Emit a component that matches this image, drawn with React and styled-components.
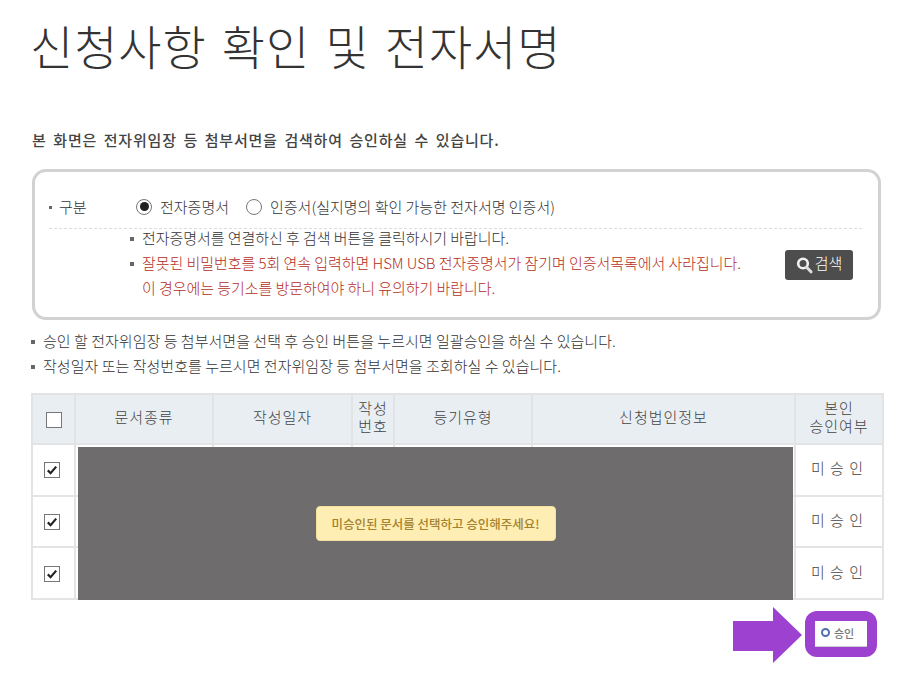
import React from 'react';
import styled, { createGlobalStyle } from 'styled-components';

const GlobalStyle = createGlobalStyle`
  html, body {
    margin: 0;
    padding: 0;
    background: #fff;
    font-family: "Noto Sans CJK KR", "Liberation Sans", sans-serif;
    color: #333;
  }
`;

const Page = styled.div`
  width: 918px;
  height: 676px;
  overflow: hidden;
  padding: 14px 34px 0 31px;
  box-sizing: border-box;
`;

const Title = styled.h1`
  margin: 0 0 0 -1px;
  font-size: 47px;
  line-height: 62px;
  font-weight: 300;
  color: #333;
  letter-spacing: 0.9px;
  word-spacing: 4px;
`;

const Intro = styled.p`
  margin: 54px 0 0 1px;
  font-size: 15px;
  line-height: 20px;
  font-weight: 500;
  color: #444;
  letter-spacing: 0.8px;
  word-spacing: 2.5px;
`;

const SearchBox = styled.section`
  margin: 19px 3px 0 1px;
  height: 151px;
  box-sizing: border-box;
  border: 3px solid #d2d2d2;
  border-radius: 14px;
  padding: 17px 16px 0 14px;
`;

const TypeRow = styled.div`
  display: flex;
  align-items: center;
  height: 40px;
  padding-bottom: 4px;
  box-sizing: border-box;
  border-bottom: 1px dashed #ddd;
  font-size: 15px;
  font-weight: 300;
`;

const Bullet = styled.i`
  flex: none;
  width: ${(p) => p.$size || 3}px;
  height: ${(p) => p.$size || 3}px;
  margin-top: 2px;
  background: #666;
`;

const TypeLabel = styled.span`
  width: 77px;
  margin-left: 7px;
`;

const RadioLabel = styled.label`
  display: flex;
  align-items: center;
  gap: 8px;
  margin-right: ${(p) => p.$gap || 0}px;
  letter-spacing: 0;
`;

const Radio = styled.span`
  width: 16px;
  height: 16px;
  box-sizing: border-box;
  border: 1.5px solid #777;
  border-radius: 50%;
  background: #fff;
  display: flex;
  align-items: center;
  justify-content: center;
  &::after {
    content: '';
    display: ${(p) => (p.$on ? 'block' : 'none')};
    width: 9px;
    height: 9px;
    border-radius: 50%;
    background: #222;
  }
`;

const NoticeRow = styled.div`
  display: flex;
  align-items: center;
  justify-content: space-between;
  padding-right: 9px;
  margin-top: -4px;
`;

const NoticeList = styled.ul`
  margin: 0;
  padding: 0 0 0 81px;
  list-style: none;
`;

const Notice = styled.li`
  display: flex;
  align-items: center;
  gap: 8px;
  height: 25px;
  font-size: 15px;
  font-weight: 300;
  letter-spacing: -0.05px;
  color: ${(p) => (p.$red ? '#b52e1c' : '#333')};
  padding-left: ${(p) => (p.$indent ? 12 : 0)}px;
`;

const SearchButton = styled.button`
  display: flex;
  align-items: center;
  justify-content: center;
  gap: 2px;
  width: 68px;
  height: 30px;
  padding: 0;
  margin-top: 4px;
  border: 0;
  border-radius: 3px;
  background: #4d4d4d;
  color: #fff;
  font-family: inherit;
  font-size: 15px;
  font-weight: 300;
`;

const SearchText = styled.span`
  margin-bottom: 4px;
`;

const GuideList = styled.ul`
  margin: 8px 0 0;
  padding: 0;
  list-style: none;
`;

const Guide = styled.li`
  display: flex;
  align-items: center;
  gap: 8px;
  height: 25px;
  font-size: 15px;
  font-weight: 300;
  letter-spacing: 0.03px;
  color: #333;
`;

const TableWrap = styled.div`
  position: relative;
  margin-top: 15px;
  width: 853px;
`;

const Table = styled.table`
  width: 851px;
  height: 207px;
  table-layout: fixed;
  border-collapse: collapse;
  font-size: 15px;
  font-weight: 300;
`;

const Th = styled.th`
  height: 50px;
  padding: 0 0 4px;
  box-sizing: border-box;
  border: 2px solid #e1e3e5;
  background: #e9eef3;
  font-weight: 300;
  line-height: 18px;
  letter-spacing: 1px;
  color: #444;
`;

const HeadCheck = styled.span`
  display: block;
  padding-top: 4px;
`;

const Td = styled.td`
  height: 49px;
  padding: 0 ${(p) => p.$right || 0}px 4px 0;
  box-sizing: border-box;
  border: 2px solid #e4e4e4;
  text-align: center;
  letter-spacing: 1px;
  color: #444;
`;

const Check = styled.span`
  display: inline-flex;
  align-items: center;
  justify-content: center;
  vertical-align: middle;
  width: 16px;
  height: 16px;
  box-sizing: border-box;
  border: 1.5px solid #777;
  background: #fff;
`;

const Overlay = styled.div`
  position: absolute;
  left: 47px;
  top: 54px;
  width: 715px;
  height: 153px;
  background: #6e6c6c;
  display: flex;
  align-items: center;
  justify-content: center;
`;

const Toast = styled.div`
  width: 240px;
  height: 35px;
  box-sizing: border-box;
  border: 1px solid #f4dfa0;
  border-radius: 4px;
  background: #ffeeb4;
  color: #a5822e;
  font-size: 12.5px;
  font-weight: 500;
  display: flex;
  align-items: center;
  justify-content: center;
`;

const ApproveRow = styled.div`
  display: flex;
  justify-content: flex-end;
  align-items: center;
  gap: 3px;
  margin-top: 5px;
  padding-right: 7px;
`;

const ArrowWrap = styled.span`
  display: flex;
  margin-top: 2px;
`;

const ApproveFrame = styled.div`
  width: 72px;
  height: 46px;
  box-sizing: border-box;
  padding: 10px;
  border-radius: 12px;
  background: #9d41d0;
`;

const ApproveButton = styled.button`
  display: flex;
  align-items: center;
  gap: 4px;
  width: 52px;
  height: 26px;
  padding: 0 0 2px 6px;
  box-sizing: border-box;
  border: 0;
  border-bottom: 1px solid #ccc;
  background: #fff;
  font-family: inherit;
  font-size: 11px;
  font-weight: 500;
  color: #777;
`;

const Dot = styled.i`
  width: 9px;
  height: 9px;
  box-sizing: border-box;
  border: 2.5px solid #4f6fae;
  border-radius: 50%;
  background: #fff;
`;

const SearchIcon = () => (
  <svg width="17" height="18" viewBox="0 0 17 18" fill="none">
    <circle cx="7" cy="7.5" r="4.8" stroke="#f2f2f2" strokeWidth="2.6" />
    <path d="M10.6 11.2 L15 15.8" stroke="#ddd" strokeWidth="3" strokeLinecap="round" />
  </svg>
);

const CheckMark = () => (
  <svg width="12" height="12" viewBox="0 0 12 12" fill="none">
    <path d="M1.8 6.4 L4.6 9.2 L10.2 2.6" stroke="#222" strokeWidth="2.2" />
  </svg>
);

const Arrow = () => (
  <svg width="69" height="56" viewBox="0 0 69 56">
    <path d="M0 14 H40 V0 L69 28 L40 56 V44 H0 Z" fill="#9d41d0" />
  </svg>
);

const rows = [0, 1, 2];

export default function App() {
  return (
    <Page>
      <GlobalStyle />
      <Title>신청사항 확인 및 전자서명</Title>
      <Intro>본 화면은 전자위임장 등 첨부서면을 검색하여 승인하실 수 있습니다.</Intro>

      <SearchBox>
        <TypeRow>
          <Bullet />
          <TypeLabel>구분</TypeLabel>
          <RadioLabel $gap={17}>
            <Radio $on />
            전자증명서
          </RadioLabel>
          <RadioLabel>
            <Radio />
            인증서(실지명의 확인 가능한 전자서명 인증서)
          </RadioLabel>
        </TypeRow>
        <NoticeRow>
          <NoticeList>
            <Notice>
              <Bullet $size={4} />
              전자증명서를 연결하신 후 검색 버튼을 클릭하시기 바랍니다.
            </Notice>
            <Notice $red>
              <Bullet $size={4} />
              잘못된 비밀번호를 5회 연속 입력하면 HSM USB 전자증명서가 잠기며 인증서목록에서 사라집니다.
            </Notice>
            <Notice $red $indent>이 경우에는 등기소를 방문하여야 하니 유의하기 바랍니다.</Notice>
          </NoticeList>
          <SearchButton>
            <SearchIcon />
            <SearchText>검색</SearchText>
          </SearchButton>
        </NoticeRow>
      </SearchBox>

      <GuideList>
        <Guide>
          <Bullet $size={4} />
          승인 할 전자위임장 등 첨부서면을 선택 후 승인 버튼을 누르시면 일괄승인을 하실 수 있습니다.
        </Guide>
        <Guide>
          <Bullet $size={4} />
          작성일자 또는 작성번호를 누르시면 전자위임장 등 첨부서면을 조회하실 수 있습니다.
        </Guide>
      </GuideList>

      <TableWrap>
        <Table>
          <colgroup>
            <col width="43" />
            <col width="138" />
            <col width="139" />
            <col width="42" />
            <col width="138" />
            <col width="263" />
            <col width="88" />
          </colgroup>
          <thead>
            <tr>
              <Th><HeadCheck><Check /></HeadCheck></Th>
              <Th>문서종류</Th>
              <Th>작성일자</Th>
              <Th>작성<br />번호</Th>
              <Th>등기유형</Th>
              <Th>신청법인정보</Th>
              <Th>본인<br />승인여부</Th>
            </tr>
          </thead>
          <tbody>
            {rows.map((row) => (
              <tr key={row}>
                <Td $right={3}><Check><CheckMark /></Check></Td>
                <Td />
                <Td />
                <Td />
                <Td />
                <Td />
                <Td $right={3}>미 승 인</Td>
              </tr>
            ))}
          </tbody>
        </Table>
        <Overlay>
          <Toast>미승인된 문서를 선택하고 승인해주세요!</Toast>
        </Overlay>
      </TableWrap>

      <ApproveRow>
        <ArrowWrap>
          <Arrow />
        </ArrowWrap>
        <ApproveFrame>
          <ApproveButton>
            <Dot />
            승인
          </ApproveButton>
        </ApproveFrame>
      </ApproveRow>
    </Page>
  );
}
